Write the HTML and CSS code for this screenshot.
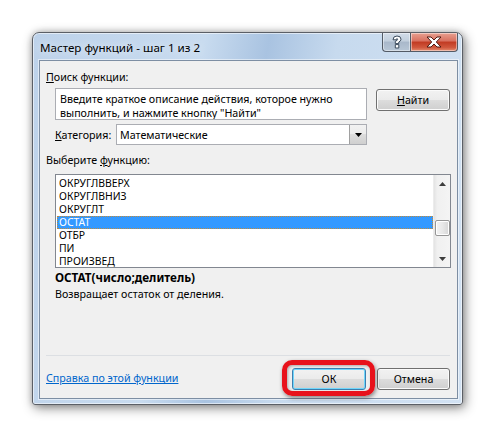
FILE: index.html
```html
<!DOCTYPE html>
<html lang="ru">
<head>
<meta charset="utf-8">
<title>Мастер функций</title>
<link rel="stylesheet" href="styles.css">
</head>
<body>
<div class="window">
  <div class="titlebar">
    <span class="title">Мастер функций - шаг 1 из 2</span>
    <div class="caption-btns">
      <div class="cbtn help">
        <svg width="12" height="14" viewBox="0 0 12 14"><path d="M2 4.8 Q2 1 6 1 Q10 1 10 4.2 Q10 6.2 7.8 7 L7.8 8.6 L4.3 8.6 L4.3 6.2 Q6.6 5.6 6.6 4.4 Q6.6 3.6 6 3.6 Q5.3 3.6 5.3 4.8 Z M4.3 9.6 L7.8 9.6 L7.8 13 L4.3 13 Z" fill="#fff" stroke="#3b4a5c" stroke-width="1"/></svg>
      </div>
      <div class="cbtn close">
        <svg width="16" height="12" viewBox="0 0 16 12"><path d="M1 1 L5 1 L8 4 L11 1 L15 1 L10.3 6 L15 11 L11 11 L8 8 L5 11 L1 11 L5.7 6 Z" fill="#fff" stroke="#4f1a12" stroke-width="1"/></svg>
      </div>
    </div>
  </div>
  <div class="client">
    <div class="label lbl-search"><u>П</u>оиск функции:</div>
    <div class="search-row">
      <div class="textbox">Введите краткое описание действия, которое нужно<br>выполнить, и нажмите кнопку "Найти"</div>
      <div class="btn find"><u>Н</u>айти</div>
    </div>
    <div class="cat-row">
      <span class="label"><u>К</u>атегория:</span>
      <div class="combo">
        <span class="combo-text">Математические</span>
        <div class="drop"><svg width="7" height="4" viewBox="0 0 7 4"><path d="M0 0 L7 0 L3.5 4 Z" fill="#000"/></svg></div>
      </div>
    </div>
    <div class="label lbl-func">Выберите <u>ф</u>ункцию:</div>
    <div class="list">
      <div class="items">
        <div class="item">ОКРУГЛВВЕРХ</div>
        <div class="item">ОКРУГЛВНИЗ</div>
        <div class="item">ОКРУГЛТ</div>
        <div class="item selected">ОСТАТ</div>
        <div class="item">ОТБР</div>
        <div class="item">ПИ</div>
        <div class="item">ПРОИЗВЕД</div>
      </div>
      <div class="scrollbar">
        <div class="sb-arrow"><svg width="7" height="4" viewBox="0 0 7 4"><path d="M3.5 0 L7 4 L0 4 Z" fill="#3d3d3d"/></svg></div>
        <div class="sb-track">
          <div class="sb-thumb"></div>
        </div>
        <div class="sb-arrow"><svg width="7" height="4" viewBox="0 0 7 4"><path d="M0 0 L7 0 L3.5 4 Z" fill="#3d3d3d"/></svg></div>
      </div>
    </div>
    <div class="sig">ОСТАТ(число;делитель)</div>
    <div class="desc">Возвращает остаток от деления.</div>
    <div class="sep"></div>
    <div class="footer">
      <a class="link" href="#">Справка по этой функции</a>
      <div class="buttons">
        <div class="ok-wrap">
          <div class="btn ok">ОК</div>
          <div class="mark"></div>
        </div>
        <div class="btn cancel">Отмена</div>
      </div>
    </div>
  </div>
</div>
</body>
</html>
```

FILE: styles.css
```css
* { box-sizing: border-box; }
html, body { margin: 0; padding: 0; background: #ffffff; }
body {
  width: 497px;
  height: 439px;
  overflow: hidden;
  font-family: "Noto Sans", "Open Sans", sans-serif;
  font-size: 10.7px;
  color: #000;
}
u { text-decoration: underline; text-underline-offset: 1px; }

.window {
  margin: 32px 0 0 32px;
  width: 431px;
  height: 373px;
  border: 1px solid #5b5f66;
  border-radius: 7px 7px 3px 3px;
  background: linear-gradient(100deg, #bdd2ea 0%, #c8dbef 35%, #a9c3e1 48%, #c7daee 62%, #d2e2f3 100%);
  box-shadow: 2px 3px 12px rgba(0,0,0,0.45), 0 0 6px rgba(0,0,0,0.2), inset 0 0 0 1px rgba(255,255,255,0.55);
  padding: 0 4px 5px 6px;
  display: flex;
  flex-direction: column;
}

.titlebar {
  height: 27px;
  display: flex;
  align-items: flex-start;
  justify-content: space-between;
}
.title {
  margin-top: 7px;
  margin-left: 1px;
  font-size: 11.6px;
  line-height: 16px;
  color: #000;
  text-shadow: 0 0 8px rgba(255,255,255,0.9);
}
.caption-btns {
  display: flex;
}
.cbtn {
  height: 19px;
  border: 1px solid #535b66;
  border-top: none;
  display: flex;
  align-items: center;
  justify-content: center;
  box-shadow: inset 0 0 0 1px rgba(255,255,255,0.45);
}
.help {
  width: 28px;
  border-radius: 0 0 0 4px;
  border-right: none;
  background: linear-gradient(#d2dce8 0%, #c2cfdd 45%, #a9b8ca 50%, #b7c6d6 100%);
}
.close {
  width: 48px;
  border-radius: 0 0 4px 0;
  background: linear-gradient(#e8a090 0%, #d8705f 45%, #c13a22 50%, #d0573d 80%, #e58d6f 100%);
}

.client {
  flex: 1;
  background: #f0f0f0;
  border: 1px solid #7d8ea3;
  display: flex;
  flex-direction: column;
  box-shadow: 0 0 0 1px rgba(255,255,255,0.5);
}

.label { line-height: 14px; white-space: nowrap; }
.lbl-search { margin: 9px 0 0 6px; }

.search-row {
  display: flex;
  align-items: flex-start;
  margin: 4px 0 0 15px;
}
.textbox {
  width: 312px;
  height: 32px;
  background: #fff;
  border: 1px solid #abadb3;
  padding: 3px 0 0 4px;
  line-height: 14px;
  white-space: nowrap;
  overflow: hidden;
}
.btn {
  height: 22px;
  border: 1px solid #707070;
  border-radius: 3px;
  background: linear-gradient(#f2f2f2 0%, #ebebeb 48%, #dddddd 50%, #cfcfcf 100%);
  box-shadow: inset 0 0 0 1px #fbfbfb;
  display: flex;
  align-items: center;
  justify-content: center;
  line-height: 14px;
}
.find { width: 74px; margin: 1px 0 0 9px; }

.cat-row {
  display: flex;
  align-items: center;
  margin: 4px 0 0 15px;
  height: 21px;
}
.cat-row .label { width: 61px; }
.combo {
  width: 251px;
  height: 21px;
  background: #fff;
  border: 1px solid #abadb3;
  display: flex;
  align-items: center;
  justify-content: space-between;
  padding-left: 3px;
}
.drop {
  width: 17px;
  height: 19px;
  border-left: 1px solid #a0a0a0;
  background: linear-gradient(#f2f2f2 0%, #ebebeb 48%, #dddddd 50%, #cfcfcf 100%);
  display: flex;
  align-items: center;
  justify-content: center;
}

.lbl-func { margin: 8px 0 0 6px; }

.list {
  margin: 7px 0 0 15px;
  width: 396px;
  height: 94px;
  border: 1px solid #828790;
  background: #fff;
  display: flex;
}
.items {
  flex: 1;
  padding: 2px 0 0 1px;
}
.item {
  height: 13px;
  line-height: 13px;
  font-size: 10.4px;
  padding-left: 2px;
  white-space: nowrap;
}
.item.selected {
  background: #3399ff;
  color: #fff;
  outline: 1px dotted #c08a3a;
  outline-offset: -1px;
}
.scrollbar {
  width: 17px;
  display: flex;
  flex-direction: column;
  background: linear-gradient(90deg, #e3e3e3 0%, #f0f0f0 20%, #f4f4f4 100%);
  border-left: 1px solid #ececec;
}
.sb-arrow {
  height: 17px;
  display: flex;
  align-items: center;
  justify-content: center;
}
.sb-track {
  flex: 1;
  padding-top: 28px;
  display: flex;
  justify-content: center;
}
.sb-thumb {
  width: 15px;
  height: 16px;
  border: 1px solid #969696;
  border-radius: 2px;
  background: linear-gradient(90deg, #f3f3f3 0%, #e8e8e8 50%, #d6d6d6 100%);
  box-shadow: inset 0 0 0 1px #fff;
}

.sig {
  margin: 2px 0 0 15px;
  font-weight: bold;
  font-size: 11.7px;
  line-height: 14px;
}
.desc {
  margin: 3px 0 0 15px;
  line-height: 14px;
}
.sep {
  margin: 54px 7px 0 6px;
  height: 1px;
  background: #dcdfe3;
}
.footer {
  display: flex;
  align-items: center;
  justify-content: space-between;
  margin: 12px 7px 0 6px;
}
.link {
  color: #0066cc;
  text-decoration: underline;
  line-height: 14px;
  margin-top: -2px;
}
.buttons { display: flex; gap: 11px; }
.ok-wrap { position: relative; }
.ok {
  width: 74px;
  border-color: #3c7fb1;
  box-shadow: inset 0 0 0 1px #6fd6fb;
}
.cancel { width: 73px; }
.mark {
  position: absolute;
  left: -10px;
  top: -8px;
  width: 93px;
  height: 36px;
  border: 5px solid #e8121b;
  border-radius: 10px;
  box-shadow: 1px 2px 4px rgba(0,0,0,0.45), inset 1px 1px 3px rgba(0,0,0,0.3);
}
```
